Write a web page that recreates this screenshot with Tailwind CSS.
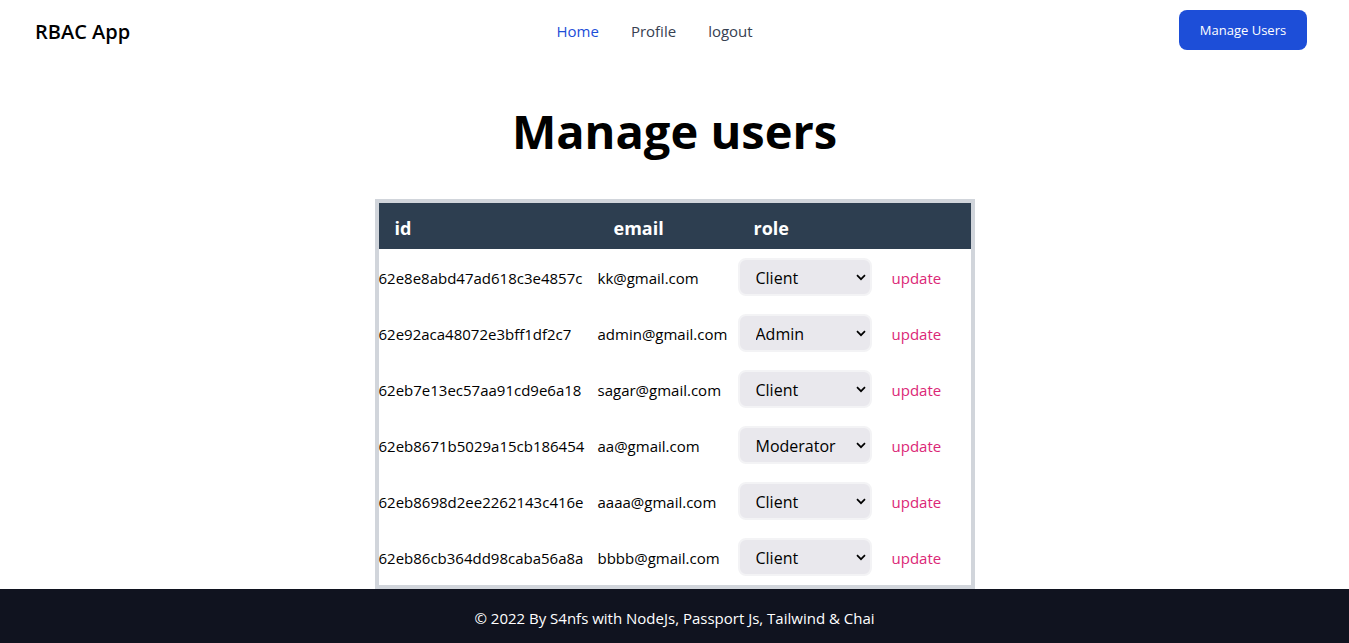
<!DOCTYPE html>
<html lang="en">
<head>
<meta charset="utf-8">
<meta name="viewport" content="width=device-width, initial-scale=1">
<title>RBAC App</title>
<script src="https://cdn.jsdelivr.net/npm/@tailwindcss/browser@4"></script>
</head>
<body class="flex min-h-screen flex-col bg-white font-['Segoe_UI','Open_Sans',sans-serif] text-[15px] text-black">
<svg class="hidden" aria-hidden="true"><symbol id="chevron" viewBox="0 0 10 7"><path d="M1 1.2 5 5.2 9 1.2" fill="none" stroke="currentColor" stroke-width="1.7"/></symbol></svg>
<header class="flex h-15 items-center justify-between pr-[42px] pl-[35px]">
  <a href="#" class="pt-1 text-[20px] font-semibold">RBAC App</a>
  <nav class="flex gap-8 pt-0.5">
    <a href="#" class="text-[#1d4ed8]">Home</a>
    <a href="#" class="text-[#374151]">Profile</a>
    <a href="#" class="text-[#374151]">logout</a>
  </nav>
  <button type="button" class="h-10 w-32 rounded-lg bg-[#1d4ed8] pt-0.5 text-[13px] text-white">Manage Users</button>
</header>
<main class="flex flex-1 flex-col items-center">
  <h1 class="mt-10 mb-9 text-[47px] leading-[63px] font-bold">Manage users</h1>
  <div class="w-[600px] max-w-full border-4 border-[#d1d5db]">
    <table class="w-full table-fixed">
      <colgroup><col class="w-[219px]"><col class="w-[140px]"><col class="w-[138px]"><col></colgroup>
      <thead class="bg-[#2d3e50] text-left text-[18px] text-white">
        <tr class="h-[46px]"><th scope="col" class="px-4 pt-1">id</th><th scope="col" class="px-4 pt-1">email</th><th scope="col" class="px-4 pt-1">role</th><td></td></tr>
      </thead>
      <tbody>
        <tr class="h-14"><td class="pt-0.5">62e8e8abd47ad618c3e4857c</td><td class="pt-0.5">kk@gmail.com</td><td><div class="relative w-[134px]"><select aria-label="Role for kk@gmail.com" class="block h-[38px] w-full appearance-none rounded-lg border-2 border-[#f3f3f5] bg-[#e9e8ed] pt-0.5 pl-4 text-[16px]"><option>Client</option><option>Admin</option><option>Moderator</option></select><svg class="pointer-events-none absolute top-4 right-1.5 h-[7px] w-2.5"><use href="#chevron"/></svg></div></td><td class="pt-0.5 pl-4"><button type="button" class="text-[#db2777]">update</button></td></tr>
        <tr class="h-14"><td class="pt-0.5">62e92aca48072e3bff1df2c7</td><td class="pt-0.5">admin@gmail.com</td><td><div class="relative w-[134px]"><select aria-label="Role for admin@gmail.com" class="block h-[38px] w-full appearance-none rounded-lg border-2 border-[#f3f3f5] bg-[#e9e8ed] pt-0.5 pl-4 text-[16px]"><option>Client</option><option selected>Admin</option><option>Moderator</option></select><svg class="pointer-events-none absolute top-4 right-1.5 h-[7px] w-2.5"><use href="#chevron"/></svg></div></td><td class="pt-0.5 pl-4"><button type="button" class="text-[#db2777]">update</button></td></tr>
        <tr class="h-14"><td class="pt-0.5">62eb7e13ec57aa91cd9e6a18</td><td class="pt-0.5">sagar@gmail.com</td><td><div class="relative w-[134px]"><select aria-label="Role for sagar@gmail.com" class="block h-[38px] w-full appearance-none rounded-lg border-2 border-[#f3f3f5] bg-[#e9e8ed] pt-0.5 pl-4 text-[16px]"><option>Client</option><option>Admin</option><option>Moderator</option></select><svg class="pointer-events-none absolute top-4 right-1.5 h-[7px] w-2.5"><use href="#chevron"/></svg></div></td><td class="pt-0.5 pl-4"><button type="button" class="text-[#db2777]">update</button></td></tr>
        <tr class="h-14"><td class="pt-0.5">62eb8671b5029a15cb186454</td><td class="pt-0.5">aa@gmail.com</td><td><div class="relative w-[134px]"><select aria-label="Role for aa@gmail.com" class="block h-[38px] w-full appearance-none rounded-lg border-2 border-[#f3f3f5] bg-[#e9e8ed] pt-0.5 pl-4 text-[16px]"><option>Client</option><option>Admin</option><option selected>Moderator</option></select><svg class="pointer-events-none absolute top-4 right-1.5 h-[7px] w-2.5"><use href="#chevron"/></svg></div></td><td class="pt-0.5 pl-4"><button type="button" class="text-[#db2777]">update</button></td></tr>
        <tr class="h-14"><td class="pt-0.5">62eb8698d2ee2262143c416e</td><td class="pt-0.5">aaaa@gmail.com</td><td><div class="relative w-[134px]"><select aria-label="Role for aaaa@gmail.com" class="block h-[38px] w-full appearance-none rounded-lg border-2 border-[#f3f3f5] bg-[#e9e8ed] pt-0.5 pl-4 text-[16px]"><option>Client</option><option>Admin</option><option>Moderator</option></select><svg class="pointer-events-none absolute top-4 right-1.5 h-[7px] w-2.5"><use href="#chevron"/></svg></div></td><td class="pt-0.5 pl-4"><button type="button" class="text-[#db2777]">update</button></td></tr>
        <tr class="h-14"><td class="pt-0.5">62eb86cb364dd98caba56a8a</td><td class="pt-0.5">bbbb@gmail.com</td><td><div class="relative w-[134px]"><select aria-label="Role for bbbb@gmail.com" class="block h-[38px] w-full appearance-none rounded-lg border-2 border-[#f3f3f5] bg-[#e9e8ed] pt-0.5 pl-4 text-[16px]"><option>Client</option><option>Admin</option><option>Moderator</option></select><svg class="pointer-events-none absolute top-4 right-1.5 h-[7px] w-2.5"><use href="#chevron"/></svg></div></td><td class="pt-0.5 pl-4"><button type="button" class="text-[#db2777]">update</button></td></tr>
      </tbody>
    </table>
  </div>
</main>
<footer class="bg-[#10131f] pt-[17px] pb-[13px] text-center leading-6 text-white">© 2022 By S4nfs with NodeJs, Passport Js, Tailwind &amp; Chai</footer>
</body>
</html>
